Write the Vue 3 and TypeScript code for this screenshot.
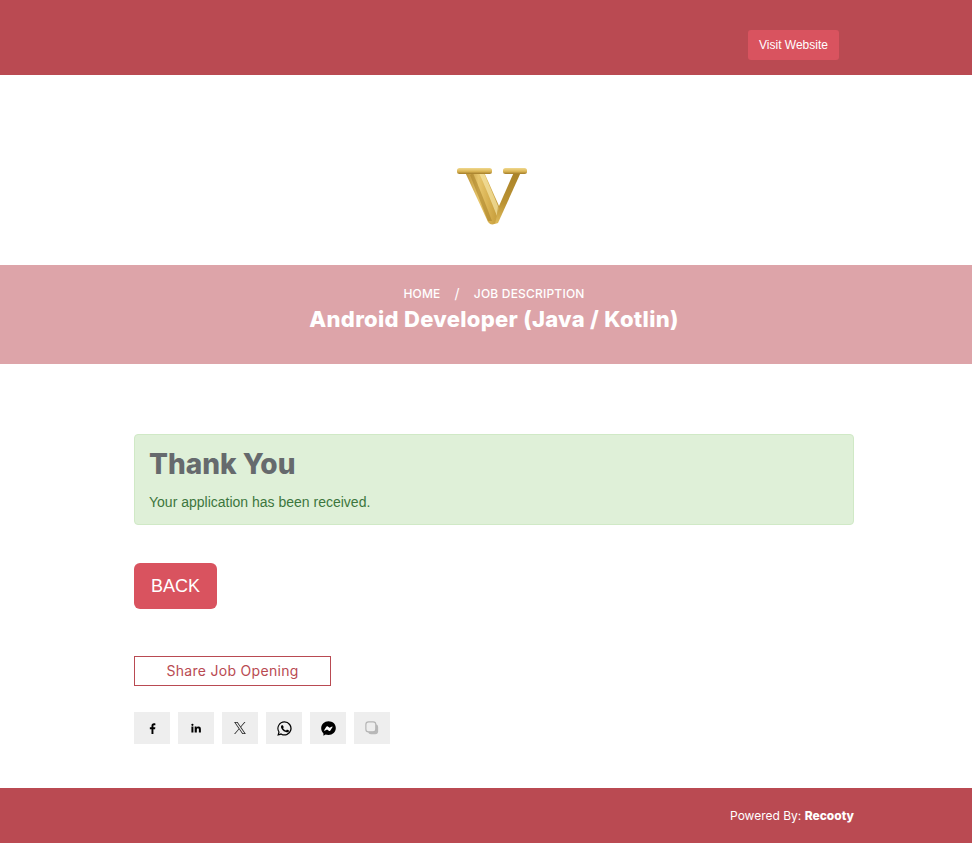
<script setup lang="ts">
const breadcrumbs: string[] = ['HOME', 'JOB DESCRIPTION']
</script>

<template>
  <div class="page">
    <header class="topbar">
      <div class="topbar-inner">
        <a class="visit">Visit Website</a>
      </div>
    </header>

    <section class="logo-band">
      <svg class="logo" width="100" height="130" viewBox="444 105 100 130" role="img" aria-label="Gold letter V">
        <defs>
          <linearGradient id="gold" x1="0" y1="0" x2="1" y2="0">
            <stop offset="0" stop-color="#b98f33" />
            <stop offset="0.4" stop-color="#e7c66c" />
            <stop offset="0.7" stop-color="#d7b050" />
            <stop offset="1" stop-color="#c39a38" />
          </linearGradient>
          <linearGradient id="goldThin" x1="0" y1="0" x2="0" y2="1">
            <stop offset="0" stop-color="#a98228" />
            <stop offset="0.6" stop-color="#bb9334" />
            <stop offset="1" stop-color="#e0bc5c" />
          </linearGradient>
          <linearGradient id="serif" x1="0" y1="0" x2="0" y2="1">
            <stop offset="0" stop-color="#f0d88e" />
            <stop offset="0.55" stop-color="#dcb757" />
            <stop offset="1" stop-color="#a27c28" />
          </linearGradient>
        </defs>
        <path d="M465 172 L484 172 L499 206 L497 222 Q492 227 488 222 Z" fill="url(#gold)" />
        <path d="M473 173 Q481 192 492 221 L488 221 L470 175 Z" fill="#a87f26" opacity="0.55" />
        <path d="M479 173 Q486 188 497 216 L498 206 L484 173 Z" fill="#f4e3a2" opacity="0.75" />
        <path d="M499 206 L514 172 L521 172 L498 223 L495 224 Z" fill="url(#goldThin)" />
        <rect x="457" y="168" width="35" height="6" rx="2.500" fill="url(#serif)" />
        <rect x="503" y="168" width="24" height="6" rx="2.500" fill="url(#serif)" />
      </svg>
    </section>

    <section class="banner">
      <nav class="crumbs">
        <span>{{ breadcrumbs[0] }}</span>
        <span class="sep">/</span>
        <span>{{ breadcrumbs[1] }}</span>
      </nav>
      <h1 class="job-title">Android Developer (Java / Kotlin)</h1>
    </section>

    <main class="content">
      <div class="alert">
        <h2 class="alert-title">Thank You</h2>
        <p class="alert-text">Your application has been received.</p>
      </div>

      <a class="back">BACK</a>

      <div class="share-label">Share Job Opening</div>

      <div class="socials">
        <span class="social">
          <svg width="11" height="11" viewBox="0 0 24 24"><path fill="#000" d="M14 24V13.500h3.600l.6-4.200H14V6.700c0-1.200.4-2 2.100-2h2.200V1c-.4 0-1.700-.2-3.200-.2-3.200 0-5.300 1.900-5.300 5.400v3.100H6.200v4.200h3.600V24z" /></svg>
        </span>
        <span class="social">
          <svg width="10" height="10" viewBox="0 0 24 24"><path fill="#000" d="M1 8.500h4.800V23H1zM3.400 1.500a2.700 2.700 0 1 1 0 5.400 2.700 2.700 0 0 1 0-5.400zM8.800 8.500h4.600v2h.1c.6-1.200 2.200-2.400 4.500-2.400 4.800 0 5.700 3.100 5.700 7.200V23h-4.800v-6.800c0-1.600 0-3.700-2.300-3.700s-2.600 1.800-2.600 3.600V23H8.800z" /></svg>
        </span>
        <span class="social">
          <svg width="12" height="12" viewBox="0 0 24 24"><path fill="#222" d="M14.200 10.200 22.900 0h-2.100l-7.600 8.800L7.200 0H.2l9.200 13.400L.2 24h2.100l8-9.300 6.400 9.300h7zM11.300 13.500l-.9-1.300L3 1.500h3.200l6 8.500.9 1.300 7.800 11.200h-3.200z" /></svg>
        </span>
        <span class="social">
          <svg width="15" height="15" viewBox="0 0 24 24"><path fill="#000" d="M12 .5A11.400 11.400 0 0 0 2.200 17.700L.5 23.500l6-1.600A11.400 11.400 0 1 0 12 .5zm0 2a9.400 9.400 0 1 1-5 17.400l-.4-.2-3.300.9.900-3.200-.3-.4A9.400 9.400 0 0 1 12 2.500zM8.300 6.600c-.2 0-.5 0-.8.300-.3.300-1.100 1.100-1.100 2.600s1.100 3 1.300 3.200c.2.200 2.200 3.400 5.400 4.600 2.600 1 3.200.8 3.800.8.600-.1 1.800-.8 2-1.500.3-.7.300-1.400.2-1.500l-.6-.3-2.100-1c-.3-.1-.5-.2-.7.100l-1 1.200c-.2.200-.4.300-.7.100-.3-.2-1.300-.5-2.500-1.500-.9-.8-1.500-1.800-1.700-2.100-.2-.3 0-.5.100-.6l.5-.5.300-.5c.1-.2.100-.4 0-.5L9.500 7.200c-.2-.5-.5-.6-.7-.6z" /></svg>
        </span>
        <span class="social">
          <svg width="15" height="15" viewBox="0 0 24 24"><path fill="#000" d="M12 .5C5.400.5.300 5.300.300 11.700c0 3.300 1.400 6.200 3.600 8.200v3.600l3.400-1.900c1.500.4 3 .7 4.700.7 6.600 0 11.700-4.800 11.700-11.100S18.600.5 12 .5z" /><path fill="#fff" d="m5 14.800 3.500-5.500c.5-.9 1.700-1.100 2.500-.5l2.800 2.100 3.900-2.100c.5-.3 1.100.2.800.7l-3.500 5.500c-.5.900-1.700 1.100-2.500.5l-2.800-2.100-3.900 2.100c-.5.300-1.100-.2-.8-.7z" /></svg>
        </span>
        <span class="social">
          <svg width="14" height="14" viewBox="0 0 24 24" fill="none"><rect x="5.500" y="5.500" width="17" height="17" rx="5" fill="#b8b8b8" /><rect x="1.500" y="1.500" width="17" height="17" rx="4.500" fill="#eeeeee" stroke="#b5b5b5" stroke-width="2" /></svg>
        </span>
      </div>
    </main>

    <footer class="footer">
      <span class="powered">Powered By: <b>Recooty</b></span>
    </footer>
  </div>
</template>

<style>
html,
body {
  margin: 0;
  background: #fff;
}
</style>

<style scoped>
.page {
  display: flex;
  flex-direction: column;
  min-height: 843px;
  font-family: "Liberation Sans", Arial, sans-serif;
}
.topbar {
  height: 75px;
  background: #ba4a52;
  box-sizing: border-box;
  padding: 0 133px 0 0;
  display: flex;
  justify-content: flex-end;
  align-items: flex-start;
}
.topbar-inner {
  padding-top: 30px;
}
.visit {
  display: block;
  width: 91px;
  height: 30px;
  line-height: 30px;
  text-align: center;
  font-size: 12px;
  color: #fff;
  background: #d9535f;
  border-radius: 3px;
}
.logo-band {
  height: 190px;
  padding-left: 16px;
  display: flex;
  justify-content: center;
  align-items: center;
}
.logo {
  display: block;
}
.banner {
  height: 99px;
  background: #dda4a9;
  color: #fff;
  display: flex;
  flex-direction: column;
  align-items: center;
  font-family: Inter, "Noto Sans", sans-serif;
  box-sizing: border-box;
  padding: 21px 0 0 16px;
}
.crumbs {
  display: flex;
  gap: 14px;
  font-size: 12px;
  font-weight: 500;
  line-height: 16px;
  letter-spacing: 0.2px;
}
.sep {
  font-weight: 400;
  font-size: 14px;
}
.job-title {
  margin: 3px 0 0;
  font-size: 22px;
  line-height: 28px;
  font-weight: 800;
  letter-spacing: 0.3px;
}
.content {
  flex: 1;
  width: 720px;
  margin-left: 134px;
  padding-top: 70px;
  box-sizing: border-box;
  display: flex;
  flex-direction: column;
  align-items: flex-start;
}
.alert {
  width: 100%;
  height: 91px;
  box-sizing: border-box;
  background: #dff0d8;
  border: 1px solid #d0e9c6;
  border-radius: 4px;
  padding: 12px 14px;
}
.alert-title {
  margin: 0;
  font-family: Inter, "Noto Sans", sans-serif;
  font-size: 28px;
  line-height: 34px;
  font-weight: 800;
  color: #666a6d;
}
.alert-text {
  margin: 11px 0 0;
  font-size: 14px;
  line-height: 20px;
  color: #3c763d;
}
.back {
  margin-top: 38px;
  width: 83px;
  height: 46px;
  line-height: 46px;
  text-align: center;
  font-size: 18px;
  color: #fff;
  background: #d9535f;
  border-radius: 6px;
}
.share-label {
  margin-top: 47px;
  width: 197px;
  height: 30px;
  line-height: 28px;
  box-sizing: border-box;
  border: 1px solid #b94a52;
  text-align: center;
  font-family: Inter, "Noto Sans", sans-serif;
  font-size: 14px;
  letter-spacing: 0.3px;
  color: #b94a52;
}
.socials {
  margin-top: 26px;
  display: flex;
  gap: 8px;
}
.social {
  width: 36px;
  height: 32px;
  background: #eeeeee;
  display: flex;
  align-items: center;
  justify-content: center;
}
.footer {
  height: 55px;
  background: #ba4a52;
  color: #fff;
  display: flex;
  justify-content: flex-end;
  align-items: center;
  padding-right: 118px;
}
.powered {
  font-family: Inter, "Noto Sans", sans-serif;
  font-size: 12px;
}
.powered b {
  font-weight: 800;
}
</style>
